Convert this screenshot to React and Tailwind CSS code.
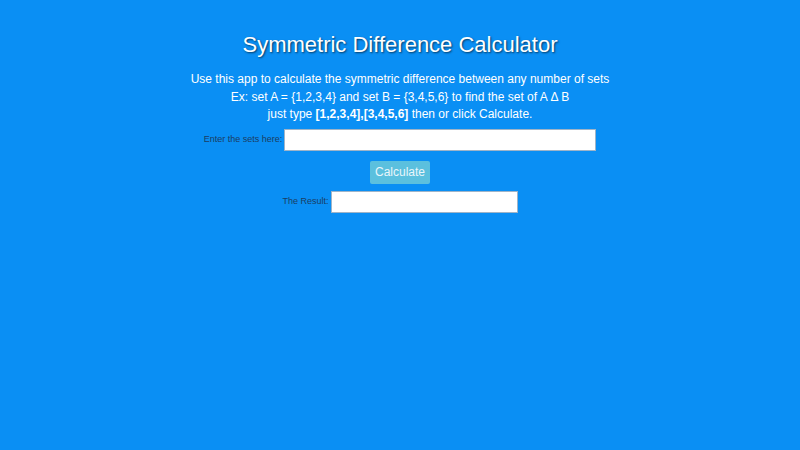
export default function App() {
  return (
    <div className="min-h-screen w-full bg-[#0a8ff4] font-['Liberation_Sans',Arial,sans-serif] text-white">
      <div className="flex flex-col items-center pt-[31px]">
        <h1 className="text-[22px] leading-[28px] [text-shadow:1px_1px_2px_rgba(0,0,0,0.6)]">
          Symmetric Difference Calculator
        </h1>
        <div className="mt-[12px] text-center text-[12px] leading-[17.5px]">
          <p>Use this app to calculate the symmetric difference between any number of sets</p>
          <p>Ex: set A = {'{1,2,3,4}'} and set B = {'{3,4,5,6}'} to find the set of A Δ B</p>
          <p>
            just type <b>[1,2,3,4],[3,4,5,6]</b> then or click Calculate.
          </p>
        </div>
        <div className="mt-[5px] flex items-center gap-[2px]">
          <label className="text-[9px] text-[#1b3d63]">Enter the sets here:</label>
          <input
            type="text"
            className="h-[22px] w-[312px] border border-[#9fb4c8] bg-white px-1 text-[12px] text-black outline-none"
          />
        </div>
        <button className="mt-[10px] h-[23px] w-[60px] rounded-[2px] bg-[#5bc0de] text-[12px] text-[#eaf6fb]">
          Calculate
        </button>
        <div className="mt-[7px] flex items-center gap-[2px]">
          <label className="text-[9px] text-[#1b3d63]">The Result:</label>
          <input
            type="text"
            className="h-[22px] w-[187px] border border-[#9fb4c8] bg-white px-1 text-[12px] text-black outline-none"
          />
        </div>
      </div>
    </div>
  );
}
